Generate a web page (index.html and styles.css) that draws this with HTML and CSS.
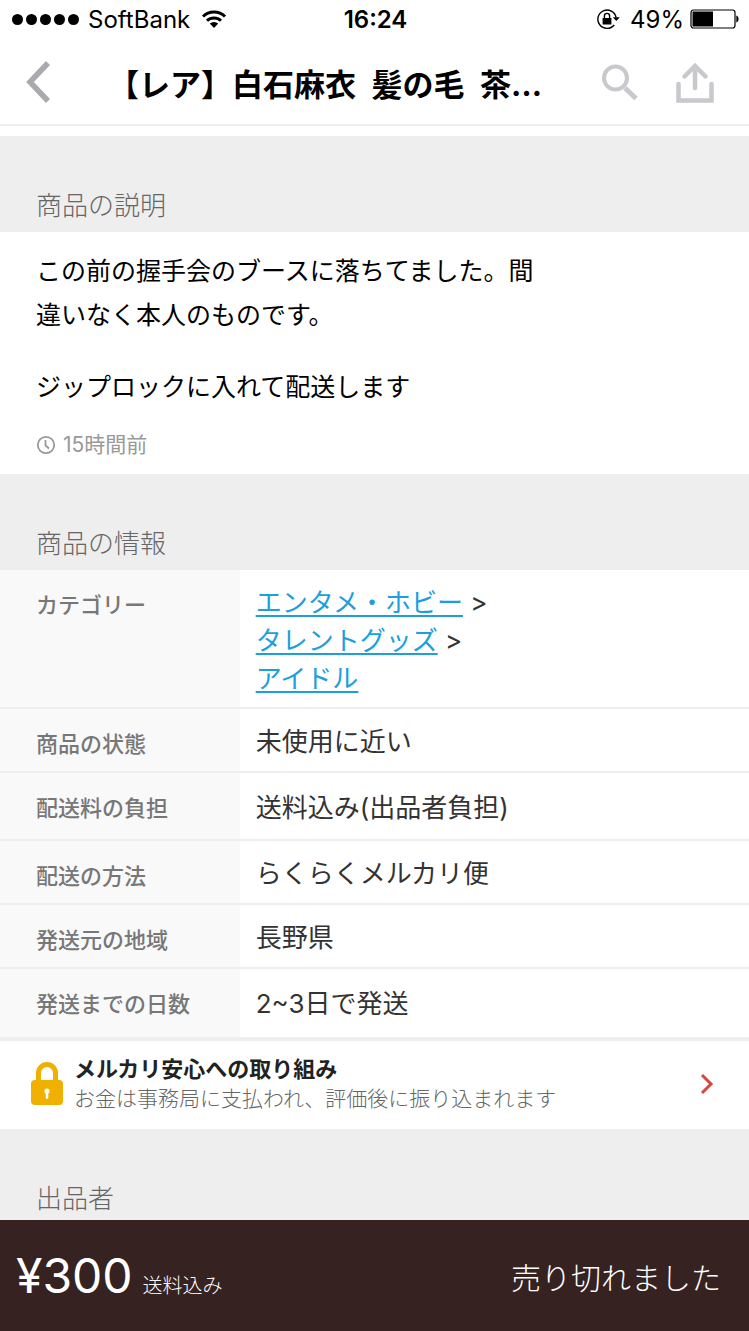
FILE: index.html
```html
<!DOCTYPE html>
<html lang="ja">
<head>
  <meta charset="UTF-8" />
  <meta name="viewport" content="width=device-width, initial-scale=1.0"/>
  <title>【レア】白石麻衣 髪の毛 茶…</title>
  <link rel="stylesheet" href="styles.css">
</head>
<body>
  <div class="status-bar">
    <div class="status-left">
      <span class="signal"><i></i><i></i><i></i><i></i><i></i></span>
      <span>SoftBank</span>
      <svg class="wifi" width="26" height="20" viewBox="0 0 26 20">
        <g fill="none" stroke="#000" stroke-width="3">
          <path d="M2 7.5a15.5 15.5 0 0 1 22 0"/>
          <path d="M6 11.8a10 10 0 0 1 14 0"/>
        </g>
        <path d="M13 19l-4.2-4.4a6 6 0 0 1 8.4 0z"/>
      </svg>
    </div>
    <div class="clock">16:24</div>
    <div class="status-right">
      <svg width="24" height="22" viewBox="0 0 24 22">
        <path d="M18.2 17A9.2 9.2 0 1 1 20.1 9.5" fill="none" stroke="#000" stroke-width="1.4"/>
        <path d="M16.8 9.3h7L20.3 13z"/>
        <path d="M6.6 10h8.8v6.5H6.6z"/>
        <path d="M8.4 10.5V8a2.6 2.6 0 0 1 5.2 0v2.5" fill="none" stroke="#000" stroke-width="1.4"/>
      </svg>
      <span class="percent">49%</span>
      <svg width="49" height="20" viewBox="0 0 49 20">
        <rect x="1" y="1" width="44" height="18" rx="2.5" fill="none" stroke="#000" stroke-width="1.2"/>
        <path d="M2.5 2.5H23v15H2.5z"/>
        <path d="M46.3 6.5c3 .4 3 6.6 0 7z"/>
      </svg>
    </div>
  </div>

  <header class="nav-bar">
    <button class="nav-btn" aria-label="戻る">
      <svg width="28" height="42" viewBox="0 0 28 42">
        <path d="M24 2L6 21l18 19" fill="none" stroke="#a9a9ae" stroke-width="5.5"/>
      </svg>
    </button>
    <h1>【レア】白石麻衣&ensp;髪の毛&ensp;茶…</h1>
    <button class="nav-btn" aria-label="検索">
      <svg width="38" height="38" viewBox="0 0 38 38" fill="none" stroke="#c8c8cd">
        <circle cx="15.5" cy="15" r="11.5" stroke-width="4"/>
        <path d="M25 25l11 10.5" stroke-width="5"/>
      </svg>
    </button>
    <button class="nav-btn" aria-label="共有">
      <svg width="40" height="42" viewBox="0 0 40 42" fill="none" stroke="#c8c8cd" stroke-width="4.5" stroke-linecap="round">
        <path d="M3.5 23v16.500h33V23"/>
        <path d="M20 27V6"/>
        <path d="M9.5 15.500L20 5l10.500 10.500"/>
      </svg>
    </button>
  </header>

  <main>
    <h2>商品の説明</h2>
    <section class="description">
      <p>この前の握手会のブースに落ちてました。間<br>違いなく本人のものです。</p>
      <p>ジップロックに入れて配送します</p>
      <div class="posted">
        <svg width="20" height="20" viewBox="0 0 20 20" fill="none" stroke="#999" stroke-width="1.8">
          <circle cx="10" cy="10" r="8.2"/>
          <path d="M9.5 5v5.5l3.5 3"/>
        </svg>
        <span>15時間前</span>
      </div>
    </section>

    <h2>商品の情報</h2>
    <table>
      <tr class="category">
        <th>カテゴリー</th>
        <td>
          <a href="#">エンタメ・ホビー</a> &gt;<br>
          <a href="#">タレントグッズ</a> &gt;<br>
          <a href="#">アイドル</a>
        </td>
      </tr>
      <tr>
        <th>商品の状態</th>
        <td>未使用に近い</td>
      </tr>
      <tr class="tall">
        <th>配送料の負担</th>
        <td>送料込み(出品者負担)</td>
      </tr>
      <tr>
        <th>配送の方法</th>
        <td>らくらくメルカリ便</td>
      </tr>
      <tr>
        <th>発送元の地域</th>
        <td>長野県</td>
      </tr>
      <tr class="tall">
        <th>発送までの日数</th>
        <td>2~3日で発送</td>
      </tr>
    </table>

    <a class="safety" href="#">
      <svg width="32" height="44" viewBox="0 0 32 44">
        <path d="M7.5 20V11a8.5 8.5 0 0 1 17 0v9" fill="none" stroke="#f0b000" stroke-width="5"/>
        <rect y="18" width="32" height="25" rx="4" fill="#f0b000"/>
        <path d="M16 26.5a2.8 2.8 0 0 1 1.3 5.2V36q-1.3 2-2.6 0v-4.3A2.8 2.8 0 0 1 16 26.5z" fill="#fff"/>
      </svg>
      <span class="safety-text">
        <strong>メルカリ安心への取り組み</strong>
        <span>お金は事務局に支払われ、評価後に振り込まれます</span>
      </span>
      <svg width="14" height="22" viewBox="0 0 14 22">
        <path d="M2 2l9 9-9 9" fill="none" stroke="#d9453f" stroke-width="3"/>
      </svg>
    </a>

    <h2>出品者</h2>
  </main>

  <footer>
    <div class="price">¥300 <small>送料込み</small></div>
    <button class="sold-btn">売り切れました</button>
  </footer>
</body>
</html>
```

FILE: styles.css
```css
* {
  box-sizing: border-box;
}

body {
  margin: 0;
  height: 100vh;
  display: flex;
  flex-direction: column;
  font-family: Inter, "Noto Sans CJK JP", sans-serif;
  background: #fff;
  color: #000;
}

button {
  padding: 0;
  border: none;
  background: none;
  font-family: inherit;
  cursor: pointer;
}

svg {
  display: block;
  flex: none;
}

/* status bar */
.status-bar {
  display: grid;
  grid-template-columns: 1fr auto 1fr;
  align-items: center;
  height: 38px;
  padding: 0 10px 0 12px;
  font-size: 24px;
}

.status-left,
.status-right {
  display: flex;
  align-items: center;
  gap: 9px;
}

.status-right {
  justify-content: flex-end;
  gap: 6px;
}

.signal {
  display: flex;
  gap: 3px;
}

.signal i {
  width: 11px;
  height: 11px;
  border-radius: 50%;
  background: #000;
}

.wifi {
  margin-left: 2px;
}

.clock {
  font-weight: 600;
}

.percent {
  margin-left: 4px;
}

/* title bar */
.nav-bar {
  display: flex;
  align-items: center;
  height: 88px;
  padding: 2px 34px 0 24px;
  border-bottom: 2px solid #eee;
}

.nav-bar h1 {
  flex: 1;
  margin: 0;
  padding-right: 2px;
  font-size: 31px;
  font-weight: 700;
  text-align: center;
  white-space: nowrap;
}

.nav-btn + .nav-btn {
  margin-left: 37px;
}

main {
  flex: 1;
  min-height: 0;
  margin-top: 10px;
  overflow-y: auto;
  scrollbar-width: none;
}

h2 {
  margin: 0;
  padding: 52px 36px 8px;
  background: #eee;
  color: #666;
  font-size: 26px;
  font-weight: 300;
  line-height: 36px;
}

/* description */
.description {
  padding: 17px 36px 14px;
  font-size: 25px;
  line-height: 44px;
}

.description p {
  margin: 0 0 28px;
}

.description p:nth-of-type(2) {
  margin-bottom: 21px;
}

.posted {
  display: flex;
  align-items: center;
  gap: 7px;
  color: #999;
  font-size: 21px;
  line-height: 30px;
}

/* item info */
table {
  width: 100%;
  border-collapse: collapse;
  line-height: 38px;
}

th,
td {
  border-bottom: 2px solid #eee;
  text-align: left;
  vertical-align: top;
}

th {
  width: 32%;
  padding: 16px 0 0 36px;
  background: #f9f9f9;
  color: #777;
  font-size: 22px;
  font-weight: 500;
}

td {
  padding: 14px 16px 10px;
  color: #333;
  font-size: 26px;
}

.category td {
  padding-bottom: 9px;
}

.tall td {
  padding: 16px 16px 12px;
}

tr:last-child td {
  padding-bottom: 14px;
}

td a {
  color: #1c9fdc;
  text-underline-offset: 3px;
}

/* safety link */
.safety {
  display: flex;
  align-items: center;
  gap: 11px;
  padding: 13px 35px 15px 31px;
  border-top: 2px solid #eee;
  color: #666;
  text-decoration: none;
}

.safety-text {
  flex: 1;
  display: flex;
  flex-direction: column;
  font-size: 21px;
  font-weight: 300;
  line-height: 30px;
}

.safety-text strong {
  color: #222;
  font-size: 22px;
  font-weight: 700;
}

/* price bar */
footer {
  display: flex;
  align-items: center;
  justify-content: space-between;
  height: 111px;
  padding: 0 28px 0 16px;
  background: #352221;
  color: #fff;
}

.price {
  display: flex;
  align-items: baseline;
  gap: 10px;
  font-size: 48px;
}

.price small {
  font-size: 20px;
  font-weight: 300;
}

.sold-btn {
  color: #fff;
  font-size: 30px;
  font-weight: 300;
}
```
